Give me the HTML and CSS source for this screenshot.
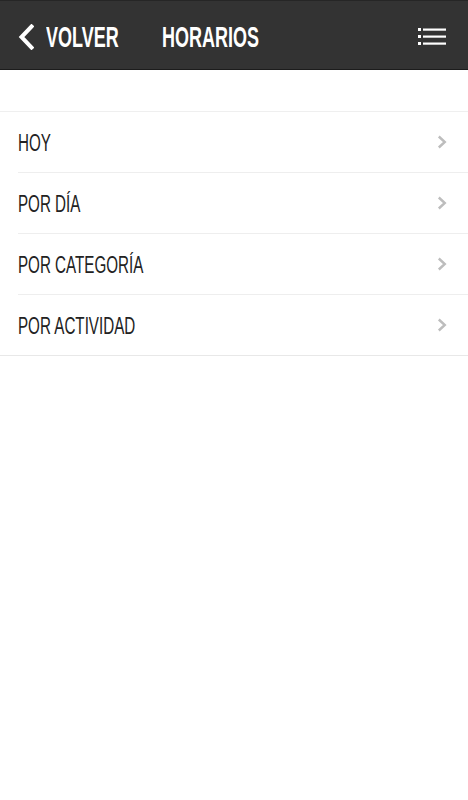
FILE: index.html
```html
<!DOCTYPE html>
<html lang="es">
<head>
<meta charset="utf-8">
<title>Horarios</title>
<link rel="stylesheet" href="styles.css">
</head>
<body>
<header class="topbar">
  <a class="back" href="#">
    <svg class="back-icon" width="16" height="26" viewBox="0 0 16 26"><path d="M13.5 2.5 L3.5 13 L13.5 23.5" fill="none" stroke="#fff" stroke-width="4" stroke-linecap="square"/></svg>
    <span class="cond head-label">VOLVER</span>
  </a>
  <span class="cond head-label title">HORARIOS</span>
  <button class="menu" aria-label="Menú">
    <svg width="28" height="18" viewBox="0 0 28 18"><g fill="#fff"><rect x="0" y="0" width="3" height="3"/><rect x="0" y="7" width="3" height="3"/><rect x="0" y="14" width="3" height="3"/><rect x="5" y="0.5" width="23" height="2.2"/><rect x="5" y="7.5" width="23" height="2.2"/><rect x="5" y="14.5" width="23" height="2.2"/></g></svg>
  </button>
</header>
<main class="content">
  <ul class="menu-list">
    <li class="item"><span class="cond item-label">HOY</span><svg class="chev" width="10" height="14" viewBox="0 0 10 14"><path d="M1.8 1.5 L7.8 7 L1.8 12.5" fill="none" stroke="#bdbdbd" stroke-width="2.4"/></svg></li>
    <li class="item"><span class="cond item-label">POR DÍA</span><svg class="chev" width="10" height="14" viewBox="0 0 10 14"><path d="M1.8 1.5 L7.8 7 L1.8 12.5" fill="none" stroke="#bdbdbd" stroke-width="2.4"/></svg></li>
    <li class="item"><span class="cond item-label">POR CATEGORÍA</span><svg class="chev" width="10" height="14" viewBox="0 0 10 14"><path d="M1.8 1.5 L7.8 7 L1.8 12.5" fill="none" stroke="#bdbdbd" stroke-width="2.4"/></svg></li>
    <li class="item last"><span class="cond item-label">POR ACTIVIDAD</span><svg class="chev" width="10" height="14" viewBox="0 0 10 14"><path d="M1.8 1.5 L7.8 7 L1.8 12.5" fill="none" stroke="#bdbdbd" stroke-width="2.4"/></svg></li>
  </ul>
</main>
</body>
</html>
```
FILE: styles.css
```css
html, body {
  margin: 0;
  padding: 0;
  background: #fff;
}
body {
  font-family: "Liberation Sans", Arial, sans-serif;
  width: 468px;
  min-height: 800px;
}
.topbar {
  box-sizing: border-box;
  height: 70px;
  background: #333333;
  border-top: 1px solid #262626;
  border-bottom: 1px solid #1c1c1c;
  display: flex;
  align-items: center;
  padding: 4px 22px 0 18px;
}
.back {
  display: flex;
  align-items: center;
  text-decoration: none;
  color: #fff;
}
.back-icon {
  display: block;
  margin-top: -1px;
}
.cond {
  display: inline-block;
  transform-origin: left center;
}
.head-label {
  color: #fff;
  font-weight: bold;
  font-size: 30px;
  line-height: 30px;
  transform: scaleX(0.6);
}
.back .head-label {
  margin-left: 12px;
  margin-right: -49px;
}
.title {
  margin-left: 44px;
}
.menu {
  margin-left: auto;
  background: none;
  border: 0;
  padding: 0;
  display: flex;
}
.menu svg {
  display: block;
}
.content {
  padding-top: 41px;
}
.menu-list {
  list-style: none;
  margin: 0;
  padding: 0;
  border-top: 1px solid #efefef;
}
.item {
  height: 61px;
  box-sizing: border-box;
  display: flex;
  align-items: center;
  justify-content: space-between;
  margin-left: 18px;
  padding-right: 21px;
  border-bottom: 1px solid #eeeeee;
}
.item.last {
  margin-left: 0;
  padding-left: 18px;
  border-bottom-color: #e8e8e8;
}
.item-label {
  color: #222;
  font-size: 23px;
  line-height: 24px;
  transform: scaleX(0.66);
  padding-top: 2px;
}
.chev {
  display: block;
}
```
